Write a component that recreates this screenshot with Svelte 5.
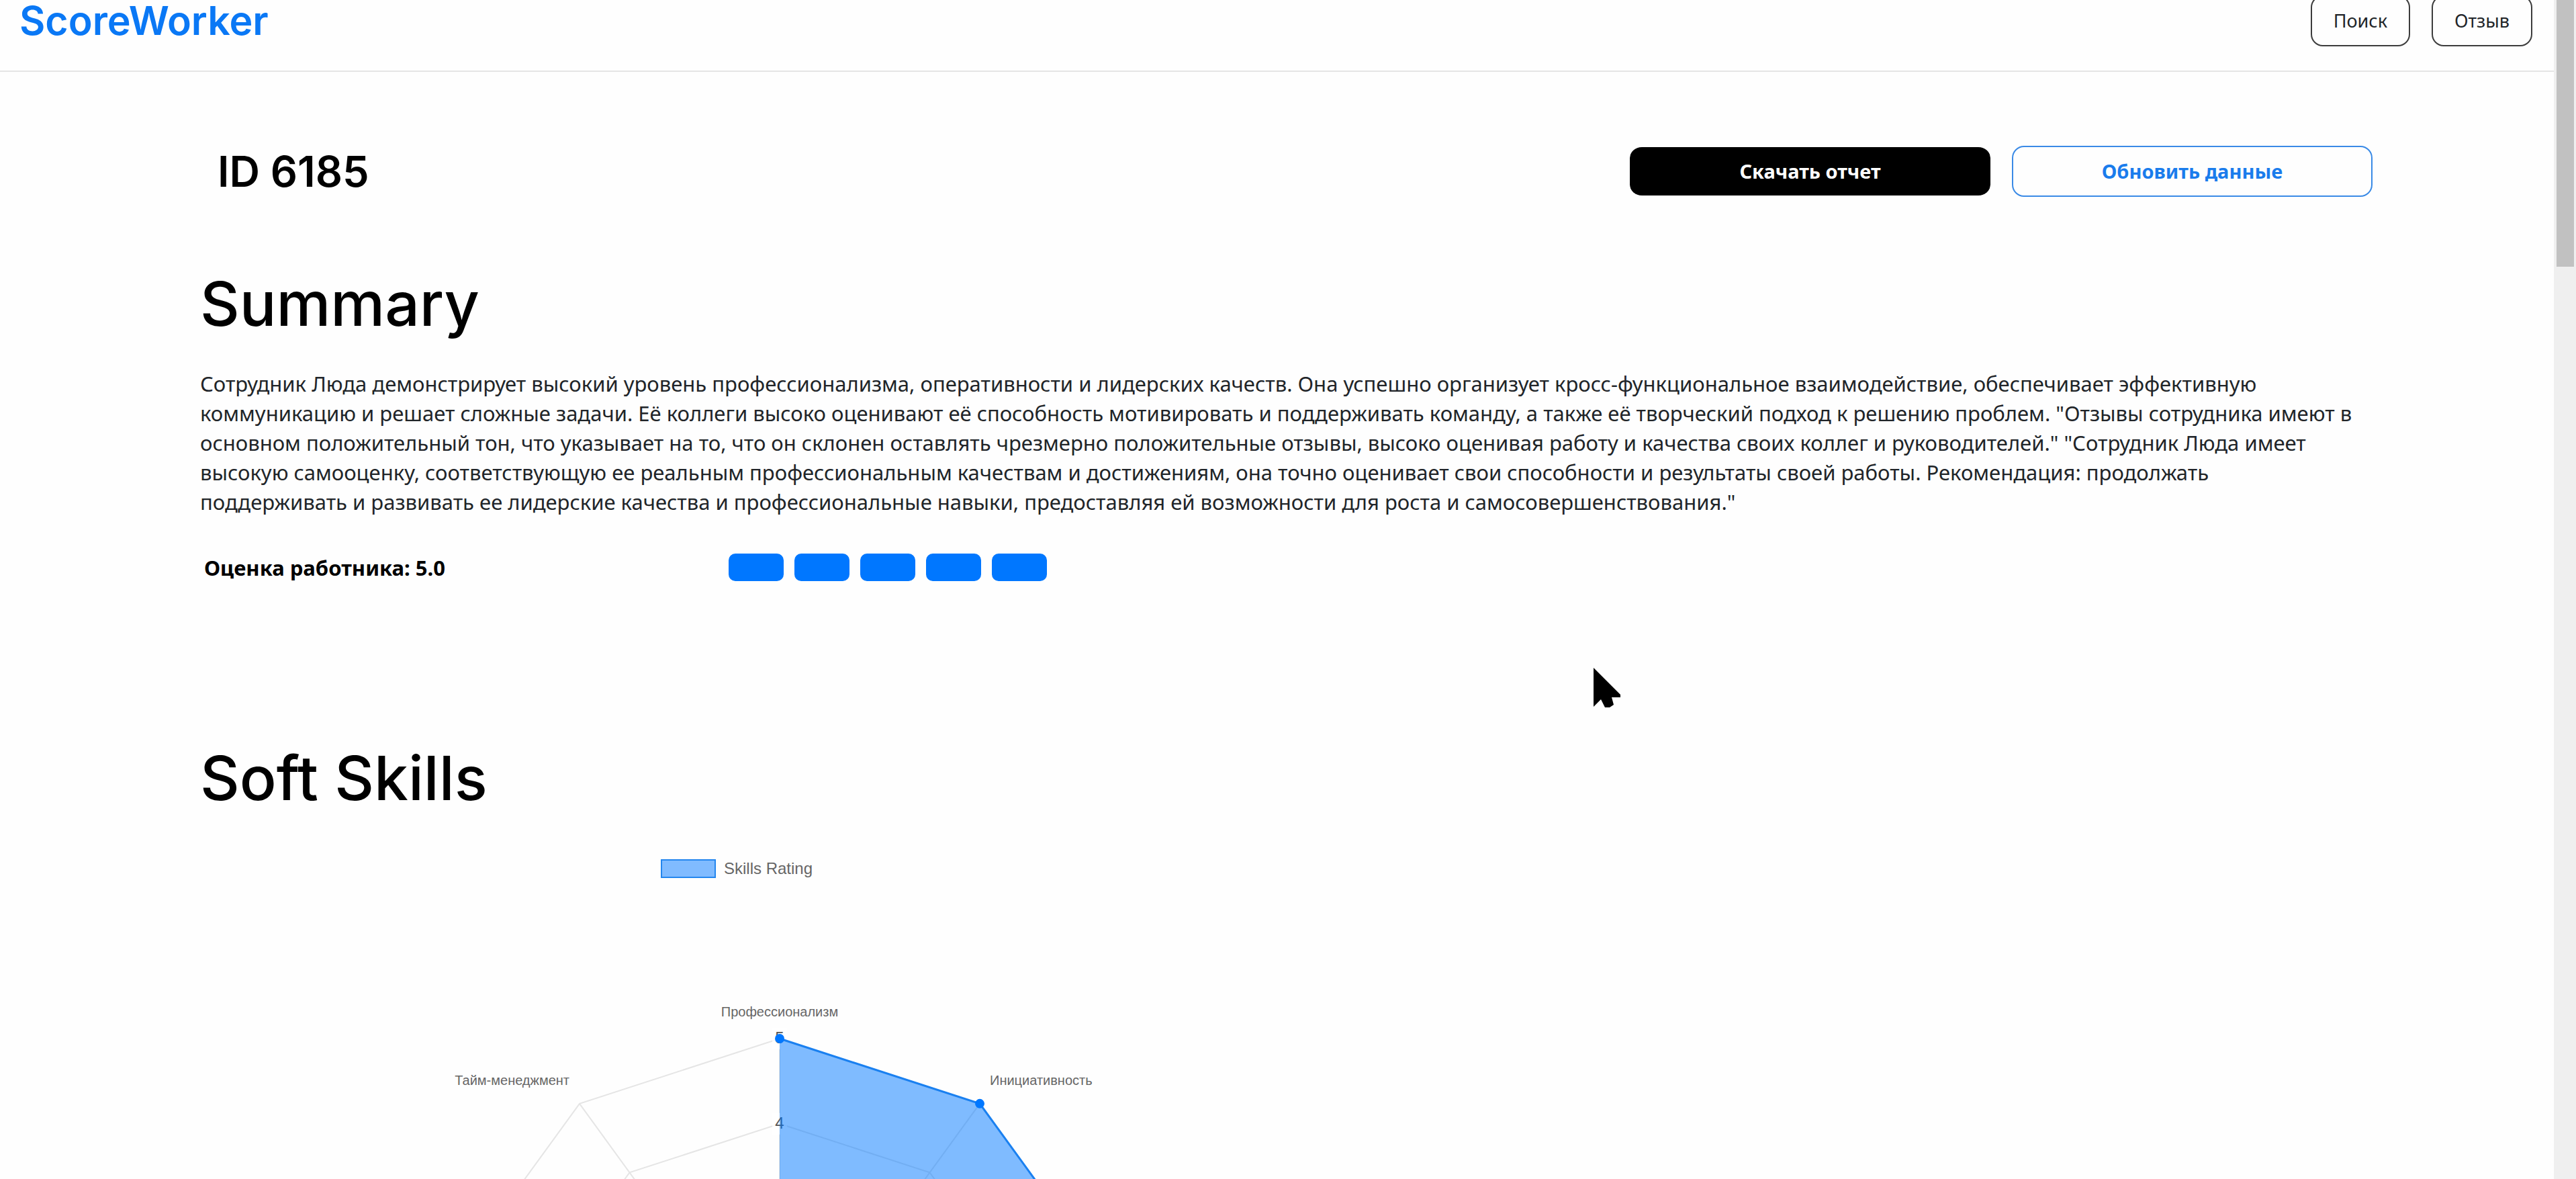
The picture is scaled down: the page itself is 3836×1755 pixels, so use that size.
<script>
  const summary =
    'Сотрудник Люда демонстрирует высокий уровень профессионализма, оперативности и лидерских качеств. Она успешно организует кросс-функциональное взаимодействие, обеспечивает эффективную коммуникацию и решает сложные задачи. Её коллеги высоко оценивают её способность мотивировать и поддерживать команду, а также её творческий подход к решению проблем. "Отзывы сотрудника имеют в основном положительный тон, что указывает на то, что он склонен оставлять чрезмерно положительные отзывы, высоко оценивая работу и качества своих коллег и руководителей." "Сотрудник Люда имеет высокую самооценку, соответствующую ее реальным профессиональным качествам и достижениям, она точно оценивает свои способности и результаты своей работы. Рекомендация: продолжать поддерживать и развивать ее лидерские качества и профессиональные навыки, предоставляя ей возможности для роста и самосовершенствования."';

  const score = 5;

  // Radar chart geometry: ten axes, scale from 1 (centre) to 5 (rim).
  const cx = 863;
  const cy = 746;
  const radius = 507;
  const values = [5, 5, 5, 5, 5, 5, 1, 1, 1, 1];

  function at(axis, value) {
    const r = (radius * (value - 1)) / 4;
    const a = (axis * Math.PI * 2) / values.length;
    return [cx + r * Math.sin(a), cy - r * Math.cos(a)];
  }

  const ring = (value) => values.map((_, i) => at(i, value).join(',')).join(' ');
  const rings = [2, 3, 4, 5].map(ring);
  const spokes = values.map((_, i) => at(i, 5));
  const area = values.map((v, i) => at(i, v).join(',')).join(' ');
  const rated = values.map((v, i) => at(i, v)).filter((_, i) => values[i] > 1);
  const edge = rated.map((p) => p.join(',')).join(' ');
  const ticks = [4, 5].map((value) => ({ value, y: at(0, value)[1] }));
</script>

<div class="window">
  <div class="page">
    <header>
      <a class="logo" href="#top">ScoreWorker</a>
      <nav>
        <button type="button">Поиск</button>
        <button type="button">Отзыв</button>
      </nav>
    </header>

    <main>
      <div class="title-row">
        <h1>ID 6185</h1>
        <div class="actions">
          <button class="download" type="button">Скачать отчет</button>
          <button class="refresh" type="button">Обновить данные</button>
        </div>
      </div>

      <section class="summary">
        <h2>Summary</h2>
        <p>{summary}</p>
        <div class="rating">
          <strong>Оценка работника: {score.toFixed(1)}</strong>
          <div class="blocks">
            {#each Array(score) as _}
              <span></span>
            {/each}
          </div>
        </div>
      </section>

      <section class="skills">
        <h2>Soft Skills</h2>
        <figure>
          <figcaption><i></i>Skills Rating</figcaption>
          <svg viewBox="0 0 1598 1400" role="img" aria-label="Skills Rating">
            <g class="grid">
              {#each rings as points}
                <polygon {points} />
              {/each}
              {#each spokes as [x, y]}
                <line x1={cx} y1={cy} x2={x} y2={y} />
              {/each}
            </g>
            {#each ticks as tick}
              <rect class="backdrop" x={cx - 11} y={tick.y - 16} width="22" height="32" />
              <text class="tick" x={cx} y={tick.y + 7}>{tick.value}</text>
            {/each}
            <polygon class="area" points={area} />
            <polyline class="edge" points={edge} />
            {#each rated as [x, y]}
              <circle cx={x} cy={y} r="7" />
            {/each}
            <text class="label" x="863" y="206" text-anchor="middle">Профессионализм</text>
            <text class="label" x="1176" y="308">Инициативность</text>
            <text class="label" x="550" y="308" text-anchor="end">Тайм-менеджмент</text>
          </svg>
        </figure>
      </section>
    </main>
  </div>

  <div class="scrollbar"><div class="thumb"></div></div>

  <svg class="cursor" viewBox="0 0 44 64" aria-hidden="true">
    <path d="M2 2V60L13 49L19 61H26L32 57L29 46H42V42Z" />
  </svg>
</div>

<style>
  :global(body) {
    background: #fefefe;
  }

  .window {
    position: relative;
    display: grid;
    grid-template-columns: minmax(0, 1fr) 33px;
    height: 100vh;
    overflow: hidden;
    color: #212529;
    font-family: 'Noto Sans', sans-serif;
  }

  .page {
    min-height: 0;
    overflow: hidden;
  }

  /* The page is scrolled a little, so the header starts above the window. */
  header {
    display: flex;
    align-items: center;
    justify-content: space-between;
    height: 148px;
    margin-top: -43px;
    padding: 0 32px 0 29px;
    border-bottom: 2px solid #e5e5e5;
  }

  .logo {
    color: #0a78f5;
    font: 600 59px/60px Inter, sans-serif;
    text-decoration: none;
  }

  button {
    box-sizing: border-box;
    height: 76px;
    border: 2px solid #3c3c3c;
    border-radius: 18px;
    background: none;
    color: #212529;
    font: 400 27px/36px 'Noto Sans', sans-serif;
  }

  nav {
    display: flex;
    gap: 32px;
  }

  nav button {
    padding: 0 32px;
  }

  main {
    padding: 110px 270px 0 298px;
  }

  .title-row {
    display: flex;
    align-items: center;
    justify-content: space-between;
    padding-left: 26px;
  }

  h1,
  h2,
  p,
  figure {
    margin: 0;
  }

  h1 {
    color: #000;
    font: 600 63px/76px Inter, sans-serif;
  }

  h2 {
    color: #000;
    font: 500 91px/110px Inter, sans-serif;
  }

  .actions {
    display: flex;
    gap: 32px;
  }

  .actions button {
    width: 537px;
    font-size: 29px;
    font-weight: 700;
  }

  .actions .download {
    border-width: 2px 0;
    border-color: transparent;
    background: #000 padding-box;
    color: #fff;
  }

  .actions .refresh {
    border-color: #3a8ae6;
    color: #1a7cec;
  }

  .summary {
    padding-top: 104px;
  }

  .summary p {
    padding: 42px 28px 55px 0;
    font-size: 31px;
    line-height: 44px;
  }

  .rating {
    display: grid;
    grid-template-columns: 781px auto;
    justify-content: start;
    align-items: center;
    height: 41px;
    padding-left: 6px;
    color: #000;
    font-size: 31px;
    line-height: 40px;
  }

  .blocks {
    display: flex;
    gap: 16px;
  }

  .blocks span {
    width: 82px;
    height: 41px;
    border-radius: 10px;
    background: #0077ff;
  }

  .skills {
    padding-top: 238px;
  }

  figure {
    width: 1598px;
    max-width: 100%;
    padding-top: 66px;
    color: #666;
    font-family: 'Liberation Sans', Arial, sans-serif;
  }

  figcaption {
    display: flex;
    align-items: center;
    justify-content: center;
    gap: 12px;
    height: 28px;
    font-size: 24px;
    line-height: 28px;
  }

  figcaption i {
    box-sizing: border-box;
    width: 82px;
    height: 28px;
    border: 2px solid #2386ee;
    background: #80bbff;
  }

  figure svg {
    display: block;
    width: 100%;
  }

  .grid {
    fill: none;
    stroke: #e5e5e5;
    stroke-width: 2;
  }

  .backdrop {
    fill: #fff;
    fill-opacity: 0.75;
  }

  .tick {
    fill: #555;
    font-size: 24px;
    text-anchor: middle;
  }

  .label {
    fill: #666;
    font-size: 20px;
  }

  .area {
    fill: #0077ff;
    fill-opacity: 0.5;
  }

  .edge {
    fill: none;
    stroke: #1a80f0;
    stroke-width: 3;
  }

  circle {
    fill: #0077ff;
  }

  .scrollbar {
    padding: 0 3px 0 4px;
    background: #efefef;
  }

  .thumb {
    height: 397px;
    background: #c1c1c1;
  }

  .cursor {
    position: absolute;
    top: 992px;
    left: 2371px;
    width: 44px;
    height: 64px;
    fill: #000;
  }
</style>
